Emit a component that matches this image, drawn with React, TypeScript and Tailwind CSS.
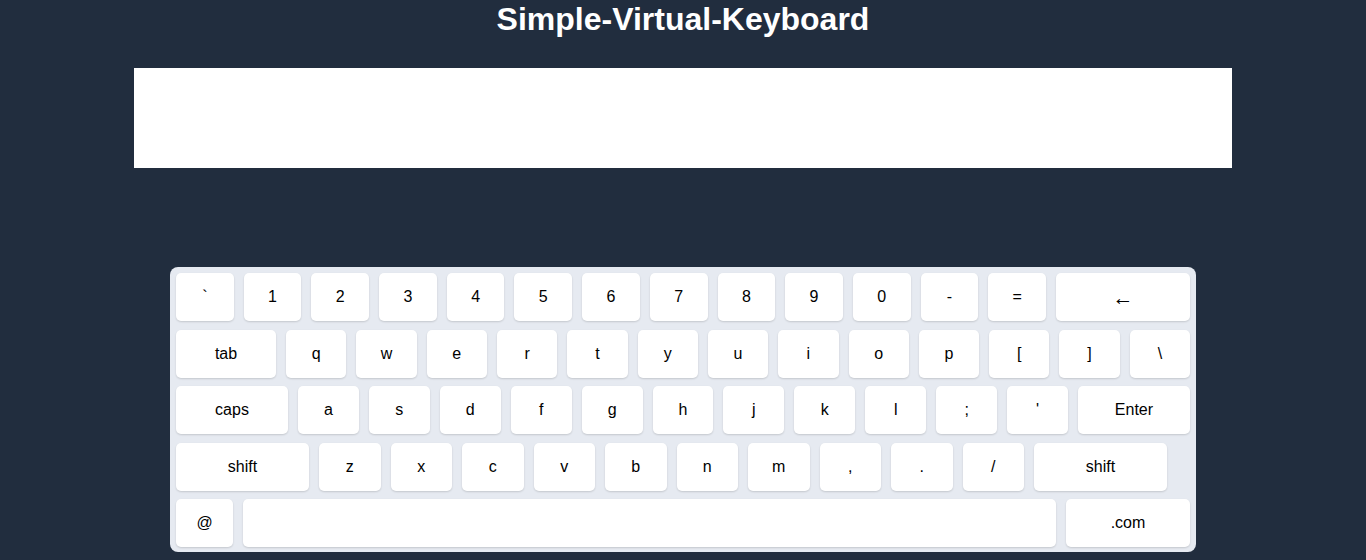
const rows: { label: string; w?: string; f?: string }[][] = [
  [
    { label: "`" }, { label: "1" }, { label: "2" }, { label: "3" }, { label: "4" },
    { label: "5" }, { label: "6" }, { label: "7" }, { label: "8" }, { label: "9" },
    { label: "0" }, { label: "-" }, { label: "=" },
    { label: "←", w: "w-[134px]", f: "text-[21px] leading-none" },
  ],
  [
    { label: "tab", w: "w-[100px]" }, { label: "q" }, { label: "w" }, { label: "e" },
    { label: "r" }, { label: "t" }, { label: "y" }, { label: "u" }, { label: "i" },
    { label: "o" }, { label: "p" }, { label: "[" }, { label: "]" }, { label: "\\" },
  ],
  [
    { label: "caps", w: "w-[112px]" }, { label: "a" }, { label: "s" }, { label: "d" },
    { label: "f" }, { label: "g" }, { label: "h" }, { label: "j" }, { label: "k" },
    { label: "l" }, { label: ";" }, { label: "'" }, { label: "Enter", w: "w-[112px]" },
  ],
  [
    { label: "shift", w: "w-[133px]" }, { label: "z" }, { label: "x" }, { label: "c" },
    { label: "v" }, { label: "b" }, { label: "n" }, { label: "m" }, { label: "," },
    { label: "." }, { label: "/" }, { label: "shift", w: "w-[133px]" },
  ],
  [
    { label: "@", w: "w-[57px]" }, { label: " " }, { label: ".com", w: "w-[124px]" },
  ],
];

function Key({ label, w, f }: { label: string; w?: string; f?: string }) {
  return (
    <div
      className={`flex h-12 items-center justify-center rounded-[5px] bg-white text-black shadow-[0_1px_2px_rgba(0,0,0,0.15)] ${
        w ? `${w} shrink-0` : "min-w-0 flex-1"
      } ${f ?? "text-base"}`}
    >
      {label}
    </div>
  );
}

export default function App() {
  return (
    <div className="min-h-[560px] bg-[#212d3e] font-['Liberation_Sans',Arial,sans-serif]">
      <h1 className="pt-px text-center text-[32px] font-bold leading-[37px] text-white">
        Simple-Virtual-Keyboard
      </h1>
      <div className="mx-auto mt-[30px] h-[100px] w-[1098px] bg-white" />
      <div className="mx-auto mt-[99px] flex w-[1026px] flex-col gap-[8.5px] rounded-lg bg-[#e6eaf1] px-[6px] pb-[5px] pt-[6px]">
        {rows.map((row, i) => (
          <div key={i} className={`flex gap-[10px] ${i === 3 ? "pr-[23px]" : ""}`}>
            {row.map((k, j) => (
              <Key key={j} label={k.label} w={k.w} f={k.f} />
            ))}
          </div>
        ))}
      </div>
    </div>
  );
}
